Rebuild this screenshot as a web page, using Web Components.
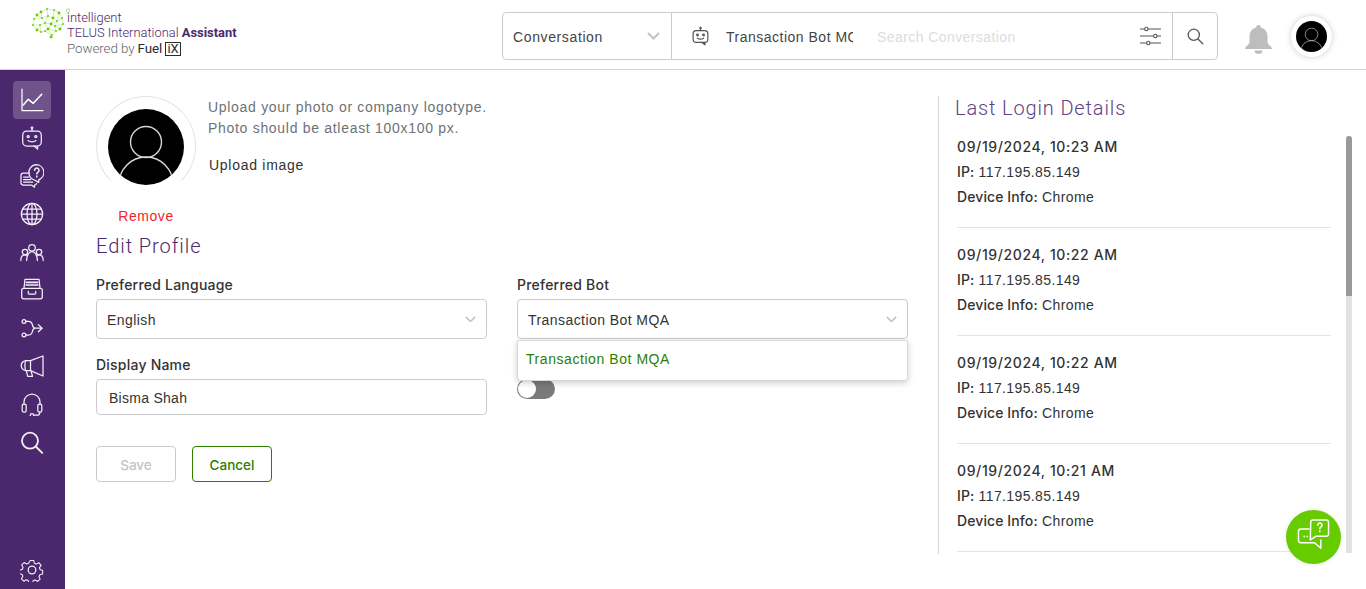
<!DOCTYPE html>
<html lang="en">
<head>
<meta charset="utf-8">
<title>Profile</title>
<style>
  html, body { margin: 0; height: 100%; overflow: hidden; background: #fff; }
  body { font-family: "Liberation Sans", Arial, sans-serif; font-size: 14px; color: #333; }
</style>
</head>
<body>
<app-shell></app-shell>

<script>
const chevron = (color = '#c4c4c4', w = 13) => `
  <svg width="${w}" height="${w * 8 / 13}" viewBox="0 0 13 8" fill="none" stroke="${color}" stroke-width="2"><path d="M1 1l5.5 5.5L12 1"/></svg>`;

const userAvatar = (size, stroke) => `
  <svg width="${size}" height="${size}" viewBox="0 0 76 76">
    <defs><clipPath id="round"><circle cx="38" cy="38" r="38"/></clipPath></defs>
    <circle cx="38" cy="38" r="38" fill="#000"/>
    <g clip-path="url(#round)" fill="none" stroke="${stroke}" stroke-width="1.4">
      <circle cx="38" cy="33" r="15.5"/>
      <circle cx="38" cy="75" r="27"/>
    </g>
  </svg>`;

const botPaths = `
  <rect x="2.7" y="5" width="18.6" height="15" rx="4"/>
  <path d="M12 5V2.6"/><circle cx="12" cy="1.8" r=".8"/>
  <circle cx="8.2" cy="10.6" r="1.1"/><circle cx="15.8" cy="10.6" r="1.1"/>
  <path d="M8 14.6q4 2.6 8 0"/><path d="M14 20l3.6 3v-3"/>`;

const navIcons = {
  chart: `<path d="M2 1v21.6h21"/><path d="M3.3 17l5-5.7 5 4 8.4-9" stroke-width="1.6"/>`,
  bot: botPaths,
  faq: `<path d="M9.5 9H3.2A2.2 2.2 0 0 0 1 11.2v7.6A2.2 2.2 0 0 0 3.2 21h8.3l3 2.2V21h.3a2 2 0 0 0 1.7-1.5"/>
    <path d="M3.6 13h5M3.6 15.6h7M3.6 18.2h9"/>
    <path d="M16.7.7a7.8 7.8 0 0 0-7.6 9.6c.6 2.7 2.7 5 5.4 5.7l4.2 2.4v-2.6a7.8 7.8 0 0 0-2-15.1z"/>
    <path d="M14.6 6.2a2.2 2.2 0 1 1 3.4 1.9c-.9.6-1.2 1-1.2 2M16.8 12v.9" stroke-width="1.5"/>`,
  globe: `<circle cx="12" cy="12" r="10.6"/><ellipse cx="12" cy="12" rx="5" ry="10.6"/><path d="M12 1.4v21.2M1.4 12h21.2M2.8 7h18.4M2.8 17h18.4"/>`,
  people: `<g transform="translate(0 1.5)"><circle cx="12" cy="6.3" r="3.3"/><circle cx="5" cy="10.6" r="2.7"/><circle cx="19" cy="10.6" r="2.7"/>
    <path d="M6.6 19c0-5 2.4-8.8 5.4-8.8s5.4 3.8 5.4 8.8"/><path d="M.8 19c0-3.4 1.8-5.6 4.2-5.6 1 0 1.8.3 2.5.9"/><path d="M23.2 19c0-3.4-1.8-5.6-4.2-5.6-1 0-1.8.3-2.5.9"/></g>`,
  archive: `<path d="M4 10l1-8.6h14l1 8.6"/><path d="M6.5 4.4h11M6 7h12" stroke-width="1.6"/>
    <rect x="1.7" y="10.4" width="20.6" height="10.4" rx="2"/><path d="M8.3 13.4v1.8a.8.8 0 0 0 .8.8h5.8a.8.8 0 0 0 .8-.8v-1.8"/>`,
  flow: `<circle cx="4" cy="5.4" r="1.9"/><circle cx="4" cy="19" r="1.9"/>
    <path d="M5.9 5.4h2.6c3 0 3.6 2 3.9 3.5.3 1.7 1 3.3 3 3.3h6.6M5.9 19h2.6c3 0 3.6-2 3.9-3.5.3-1.7 1-3.3 3-3.3"/><path d="M18.4 8.6l3.6 3.6-3.6 3.6"/>`,
  megaphone: `<path d="M23 2v20L10.500 16.600H6.200a5 5 0 0 1 0-10h4.300z"/><path d="M10.500 6.600v10M5.800 6.600c-1.200 1.400-1.200 8.600 0 10"/><path d="M6.400 16.800l1.300 5.600h4.800l-1.400-5.200"/>`,
  headset: `<path d="M4 12.5V10a8 8 0 0 1 16 0v2.5"/><rect x="2.2" y="12" width="4" height="8" rx="1.6"/><rect x="17.8" y="12" width="4" height="8" rx="1.6"/><path d="M19.8 20v.8a2.8 2.8 0 0 1-2.8 2.4h-3"/><circle cx="12" cy="23.2" r="1.7"/>`,
  search: `<circle cx="10" cy="10.7" r="8" stroke-width="1.8"/><path d="M15.8 16.5l6.4 6.4" stroke-width="1.8"/>`,
  gear: `<circle cx="12" cy="12" r="3.8"/><path d="M10 1h4l.7 3.2 2.2 1 2.9-1.6 2.7 3-1.9 2.6.7 2.3 3 1.2-.1 4-3.1.8-1.1 2.1 1.4 3-3 2.6-2.7-1.8-2.2.8-1 3h-4l-.9-3.1-2.2-.9-2.8 1.7-2.8-2.8 1.7-2.8-.8-2.2-3.1-1v-4l3.2-.8.9-2.2-1.6-2.9 2.9-2.8 2.8 1.7 2.2-.9z" transform="translate(1.6 1.6) scale(.867)"/>`
};

class NavIcon extends HTMLElement {
  connectedCallback() {
    const shadow = this.attachShadow({ mode: 'open' });
    const active = this.hasAttribute('active');
    shadow.innerHTML = `
      <style>
        :host { display: flex; justify-content: center; align-items: center; width: 38px; height: 38px; border-radius: 4px; }
        :host([active]) { background: rgba(255,255,255,.2); }
        svg { display: block; }
      </style>
      <svg width="24" height="24" viewBox="0 0 24 24" fill="none" stroke="${active ? '#fff' : '#f4eff8'}" stroke-width="1.25" stroke-linecap="round" stroke-linejoin="round">${navIcons[this.getAttribute('name')]}</svg>`;
  }
}

class SideNav extends HTMLElement {
  constructor() {
    super();
    const names = ['bot', 'faq', 'globe', 'people', 'archive', 'flow', 'megaphone', 'headset', 'search'];
    this.attachShadow({ mode: 'open' }).innerHTML = `
      <style>
        :host { display: flex; flex-direction: column; align-items: center; width: 65px; flex: none; background: #4b286d; padding: 11px 1px 0 0; box-sizing: border-box; }
        .bottom { margin-top: auto; }
      </style>
      <nav-icon name="chart" active></nav-icon>
      ${names.map(n => `<nav-icon name="${n}"></nav-icon>`).join('')}
      <div class="bottom"><nav-icon name="gear"></nav-icon></div>`;
  }
}

class BrandLogo extends HTMLElement {
  constructor() {
    super();
    // network of nodes next to the wordmark, drawn in a brain outline
    const nodes = [[9,4],[15,1],[22,2],[27,5],[30,10],[31,16],[28,21],[24,23],[20,27],[19,29],[13,23],[9,24],[5,22],[1,17],[2,11],[5,7],[10,10],[16,8],[21,10],[25,13],[13,15],[19,16],[8,17],[23,18],[16,21]];
    const links = [[0,1],[1,2],[2,3],[3,4],[4,5],[5,6],[6,7],[7,8],[8,9],[8,10],[10,11],[11,12],[12,13],[13,14],[14,15],[15,0],[0,16],[16,17],[17,18],[18,19],[19,4],[1,17],[2,18],[3,19],[15,16],[14,16],[16,20],[20,21],[21,23],[23,6],[19,23],[18,21],[17,20],[20,22],[22,13],[22,12],[22,11],[20,24],[24,21],[24,10],[24,7],[24,8],[21,19],[5,23],[7,23]];
    this.attachShadow({ mode: 'open' }).innerHTML = `
      <style>
        :host { display: flex; align-items: flex-start; margin-left: 32px; }
        svg { flex: none; margin-top: 8px; }
        .words { margin: 10px 0 0 -3px; color: #4b286d; font: 300 12.9px/15px Roboto, "Liberation Sans", sans-serif; white-space: nowrap; }
        b { font-weight: 700; }
        .pw { color: #666; font-size: 13.4px; letter-spacing: -.1px; margin-top: 1px; }
        .fuel { color: #2a2c2e; font-weight: 400; }
        .ix { display: inline-block; border: 1px solid #2a2c2e; color: #2a2c2e; line-height: 12px; padding: 0 1px; font-size: 13px; font-weight: 400; }
      </style>
      <svg width="38" height="31" viewBox="0 0 38 31">
        <g stroke="#b5e484" stroke-width=".6">${links.map(([a, b]) => `<line x1="${nodes[a][0]}" y1="${nodes[a][1]}" x2="${nodes[b][0]}" y2="${nodes[b][1]}"/>`).join('')}</g>
        <g fill="#66cc00">${nodes.map(([x, y], i) => `<circle cx="${x}" cy="${y}" r="${i % 3 ? .9 : 1.4}"/>`).join('')}</g>
        <circle cx="36" cy="2.600" r="1.800" fill="none" stroke="#8fd64a" stroke-width=".7"/>
      </svg>
      <div class="words">
        <div>intelligent</div>
        <div>TELUS International <b>Assistant</b></div>
        <div class="pw">Powered by <span class="fuel">Fuel</span> <span class="ix">iX</span></div>
      </div>`;
  }
}

class SearchBar extends HTMLElement {
  constructor() {
    super();
    this.attachShadow({ mode: 'open' }).innerHTML = `
      <style>
        :host { display: flex; align-items: center; width: 716px; height: 48px; box-sizing: border-box; border: 1px solid #ccc; border-radius: 4px; background: #fff; letter-spacing: .62px; color: #444; }
        .scope { display: flex; align-items: center; justify-content: space-between; width: 169px; height: 100%; padding: 0 11px 0 10px; box-sizing: border-box; border-right: 1px solid #ccc; }
        .scope span, .bot span, .ph { padding-top: 2px; }
        .bot { display: flex; align-items: center; gap: 16px; margin-left: 19px; width: 162px; flex: none; }
        .bot span { width: 127px; flex: none; overflow: hidden; white-space: nowrap; letter-spacing: .5px; }
        .ph { margin-left: 24px; flex: 1; color: #dcdcdc; white-space: nowrap; letter-spacing: .42px; }
        .tune { margin-right: 11px; display: block; }
        .go { display: flex; align-items: center; justify-content: center; width: 44px; height: 100%; border-left: 1px solid #ccc; flex: none; }
      </style>
      <div class="scope"><span>Conversation</span>${chevron()}</div>
      <div class="bot">
        <svg width="19" height="21" viewBox="0 0 24 25" fill="none" stroke="#555" stroke-width="1.5" stroke-linecap="round" stroke-linejoin="round">${botPaths}</svg>
        <span>Transaction Bot MQA</span>
      </div>
      <div class="ph">Search Conversation</div>
      <svg class="tune" width="21" height="20" viewBox="0 0 21 20" fill="none" stroke="#555" stroke-width="1.1">
        <path d="M0 3h4.600M8 3h13M0 10h13.600M17 10h4M0 17h6.600M10 17h11"/>
        <circle cx="6.300" cy="3" r="1.700"/><circle cx="15.300" cy="10" r="1.700"/><circle cx="8.300" cy="17" r="1.700"/>
      </svg>
      <div class="go">
        <svg width="17" height="17" viewBox="0 0 17 17" fill="none" stroke="#555" stroke-width="1.3"><circle cx="6.800" cy="6.800" r="5.600"/><path d="M11 11l5.200 5.200"/></svg>
      </div>`;
  }
}

class AppHeader extends HTMLElement {
  constructor() {
    super();
    this.attachShadow({ mode: 'open' }).innerHTML = `
      <style>
        :host { display: flex; align-items: flex-start; height: 70px; flex: none; box-sizing: border-box; border-bottom: 1px solid #d4d4d4; background: #fff; }
        search-bar { margin: 12px 0 0 auto; }
        .bell { display: block; margin: 25px 0 0 27px; }
        .me { display: flex; justify-content: center; align-items: center; width: 41px; height: 41px; margin: 16px 34px 0 19px; border-radius: 50%; background: #fff; box-shadow: 0 0 6px rgba(0,0,0,.2); flex: none; }
        .me svg { display: block; }
      </style>
      <brand-logo></brand-logo>
      <search-bar></search-bar>
      <svg class="bell" width="27" height="29" viewBox="0 0 27 29" fill="#bdbdbd">
        <path d="M13.500 0a2.200 2.200 0 0 1 2.200 2.400c4.400 1 6.800 4.400 6.800 9v5.200c0 2.200 1.500 3.400 3.200 4.900.8.800 1.300 1.500 1.300 2.500H0c0-1 .5-1.700 1.300-2.500 1.700-1.500 3.200-2.700 3.200-4.900v-5.200c0-4.600 2.400-8 6.800-9A2.200 2.200 0 0 1 13.500 0z"/>
        <path d="M9.500 25.400h8a4 3.400 0 0 1-8 0z"/>
      </svg>
      <div class="me">${userAvatar(31, '#ddd')}</div>`;
  }
}

const fieldLabelCss = `
  label { display: block; height: 28px; margin-top: -14px; font: 500 14px/28px Inter, "Liberation Sans", sans-serif; color: #333; letter-spacing: .22px; }`;

class SelectField extends HTMLElement {
  constructor() {
    super();
    const option = this.getAttribute('option');
    this.attachShadow({ mode: 'open' }).innerHTML = `
      <style>
        :host { display: block; position: relative; }
        ${fieldLabelCss}
        .box { display: flex; align-items: center; justify-content: space-between; height: 40px; box-sizing: border-box; padding: 0 10px; border: 1px solid #ccc; border-radius: 4px; color: #333; letter-spacing: .43px; }
        .box span { padding-top: 2px; }
        .menu { position: absolute; left: 0; right: 0; top: 55px; z-index: 2; height: 41px; box-sizing: border-box; padding: 0 8px; line-height: 36px; background: #fff; border: 1px solid #d8d8d8; border-radius: 0 0 4px 4px; box-shadow: 0 2px 6px rgba(0,0,0,.2); color: #2b8000; letter-spacing: .56px; }
      </style>
      <label>${this.getAttribute('label')}</label>
      <div class="box"><span><slot></slot></span>${chevron('#c4c4c4', 11)}</div>
      ${option ? `<div class="menu">${option}</div>` : ''}`;
  }
}

class TextField extends HTMLElement {
  constructor() {
    super();
    this.attachShadow({ mode: 'open' }).innerHTML = `
      <style>
        :host { display: block; }
        ${fieldLabelCss}
        .box { height: 36px; line-height: 36px; box-sizing: border-box; padding: 0 12px; border: 1px solid #ccc; border-radius: 4px; color: #333; letter-spacing: .27px; }
      </style>
      <label>${this.getAttribute('label')}</label>
      <div class="box"><slot></slot></div>`;
  }
}

class UploadBox extends HTMLElement {
  constructor() {
    super();
    this.attachShadow({ mode: 'open' }).innerHTML = `
      <style>
        :host { display: flex; align-items: flex-start; gap: 12px; }
        .pic { width: 100px; flex: none; }
        .ring { display: flex; align-items: center; justify-content: center; width: 100px; height: 100px; box-sizing: border-box; border: 1px solid #e4e4e4; border-bottom-color: transparent; border-radius: 50%; }
        .ring svg { display: block; margin-top: 1px; }
        .rm { margin-top: 10px; text-align: center; color: #f4222f; letter-spacing: .55px; line-height: 20px; }
        .hint { color: #6d7278; letter-spacing: .7px; line-height: 21px; padding-top: 1px; }
        .up { margin: 16px 0 0 1px; color: #333; letter-spacing: .72px; line-height: 20px; }
      </style>
      <div class="pic">
        <div class="ring">${userAvatar(76, '#d8d8d8')}</div>
        <div class="rm">Remove</div>
      </div>
      <div>
        <div class="hint">Upload your photo or company logotype.<br>Photo should be atleast 100x100 px.</div>
        <div class="up">Upload image</div>
      </div>`;
  }
}

class ProfileForm extends HTMLElement {
  constructor() {
    super();
    this.attachShadow({ mode: 'open' }).innerHTML = `
      <style>
        :host { display: block; width: 812px; flex: none; }
        h2 { margin: 7px 0 0; font: 300 20px/26px Roboto, "Liberation Sans", sans-serif; letter-spacing: .95px; color: #4b286d; }
        .grid { display: grid; grid-template-columns: 391px 391px; column-gap: 30px; margin-top: 26px; }
        .row2 { margin-top: 26px; }
        .switch { position: relative; width: 38px; height: 20px; margin-top: 40px; border-radius: 10px; background: #7a7a7a; }
        .switch::before { content: ""; position: absolute; left: 1px; top: 1px; width: 18px; height: 18px; border-radius: 50%; background: #fff; }
        .btns { display: flex; gap: 16px; margin-top: 31px; }
        .btn { width: 80px; height: 36px; box-sizing: border-box; border: 1px solid #c8c8c8; border-radius: 4px; text-align: center; font: 500 13.5px/36px Inter, "Liberation Sans", sans-serif; color: #c4c4c4; }
        .btn.go { border-color: #2b8000; color: #2b8000; }
      </style>
      <upload-box></upload-box>
      <h2>Edit Profile</h2>
      <div class="grid">
        <select-field label="Preferred Language">English</select-field>
        <select-field label="Preferred Bot" option="Transaction Bot MQA">Transaction Bot MQA</select-field>
        <text-field class="row2" label="Display Name">Bisma Shah</text-field>
        <div class="switch"></div>
      </div>
      <div class="btns"><div class="btn">Save</div><div class="btn go">Cancel</div></div>`;
  }
}

class LoginCard extends HTMLElement {
  constructor() {
    super();
    this.attachShadow({ mode: 'open' }).innerHTML = `
      <style>
        :host { display: block; box-sizing: border-box; height: 108px; padding: 15px 0 0; border-bottom: 1px solid #e4e4e4; color: #333; letter-spacing: .38px; }
        div { height: 25px; line-height: 25px; }
        .when { font: 500 14px/23px Inter, "Liberation Sans", sans-serif; letter-spacing: .62px; }
        b { font: 500 14px/1 Inter, "Liberation Sans", sans-serif; letter-spacing: .1px; }
      </style>
      <div class="when">${this.getAttribute('when')}</div>
      <div><b>IP:</b> 117.195.85.149</div>
      <div><b>Device Info:</b> Chrome</div>`;
  }
}

class LoginPanel extends HTMLElement {
  constructor() {
    super();
    this.attachShadow({ mode: 'open' }).innerHTML = `
      <style>
        :host { display: block; position: relative; width: 428px; height: 458px; flex: none; box-sizing: border-box; margin-left: 30px; border-left: 1px solid #d4d4d4; overflow: hidden; }
        h2 { margin: 0 0 0 16px; font: 300 20px/24px Roboto, "Liberation Sans", sans-serif; letter-spacing: .86px; color: #5f3f80; }
        .list { width: 374px; margin-left: 18px; }
        .track { position: absolute; left: 407px; top: 40px; width: 6px; height: 417px; background: #e2e2e2; border-radius: 3px 3px 0 0; }
        .thumb { height: 160px; background: #999; border-radius: 3px 3px 0 0; }
      </style>
      <h2>Last Login Details</h2>
      <div class="list"><slot></slot></div>
      <div class="track"><div class="thumb"></div></div>`;
  }
}

class ChatButton extends HTMLElement {
  constructor() {
    super();
    this.attachShadow({ mode: 'open' }).innerHTML = `
      <style>
        :host { position: fixed; left: 1286px; top: 510px; width: 55px; height: 54px; display: flex; align-items: center; justify-content: center; border-radius: 50%; background: #66cc00; box-shadow: 0 0 4px rgba(0,0,0,.1); }
        svg { margin-bottom: 5px; }
      </style>
      <svg width="33" height="31" viewBox="0 0 36 34" fill="none" stroke="#fff" stroke-width="1.6" stroke-linejoin="round" stroke-linecap="round">
        <path d="M13 11H4a2.500 2.500 0 0 0-2.500 2.500v10A2.500 2.500 0 0 0 4 26h15l7 6v-9"/>
        <path d="M15 2.500A2 2 0 0 1 17 1h15a2.500 2.500 0 0 1 2.500 2.500v13A2.500 2.500 0 0 1 32 19H20.500l-6 4z"/>
        <path d="M22.600 6.800a2.300 2.300 0 1 1 3.600 1.900c-.9.600-1.300 1-1.300 2M24.900 13.200v.6" stroke-width="1.800"/>
        <path d="M7.800 19v.4M11 19v.4" stroke-width="1.600"/>
      </svg>`;
  }
}

class AppShell extends HTMLElement {
  constructor() {
    super();
    this.attachShadow({ mode: 'open' }).innerHTML = `
      <style>
        :host { display: flex; flex-direction: column; height: 589px; }
        .body { display: flex; flex: 1; min-height: 0; }
        main { display: flex; align-items: flex-start; flex: 1; padding: 26px 0 0 31px; min-width: 0; }
      </style>
      <app-header></app-header>
      <div class="body">
        <side-nav></side-nav>
        <main>
          <profile-form></profile-form>
          <login-panel>
            <login-card when="09/19/2024, 10:23 AM"></login-card>
            <login-card when="09/19/2024, 10:22 AM"></login-card>
            <login-card when="09/19/2024, 10:22 AM"></login-card>
            <login-card when="09/19/2024, 10:21 AM"></login-card>
          </login-panel>
        </main>
      </div>
      <chat-button></chat-button>`;
  }
}

customElements.define('nav-icon', NavIcon);
customElements.define('side-nav', SideNav);
customElements.define('brand-logo', BrandLogo);
customElements.define('search-bar', SearchBar);
customElements.define('app-header', AppHeader);
customElements.define('select-field', SelectField);
customElements.define('text-field', TextField);
customElements.define('upload-box', UploadBox);
customElements.define('profile-form', ProfileForm);
customElements.define('login-card', LoginCard);
customElements.define('login-panel', LoginPanel);
customElements.define('chat-button', ChatButton);
customElements.define('app-shell', AppShell);
</script>
</body>
</html>
